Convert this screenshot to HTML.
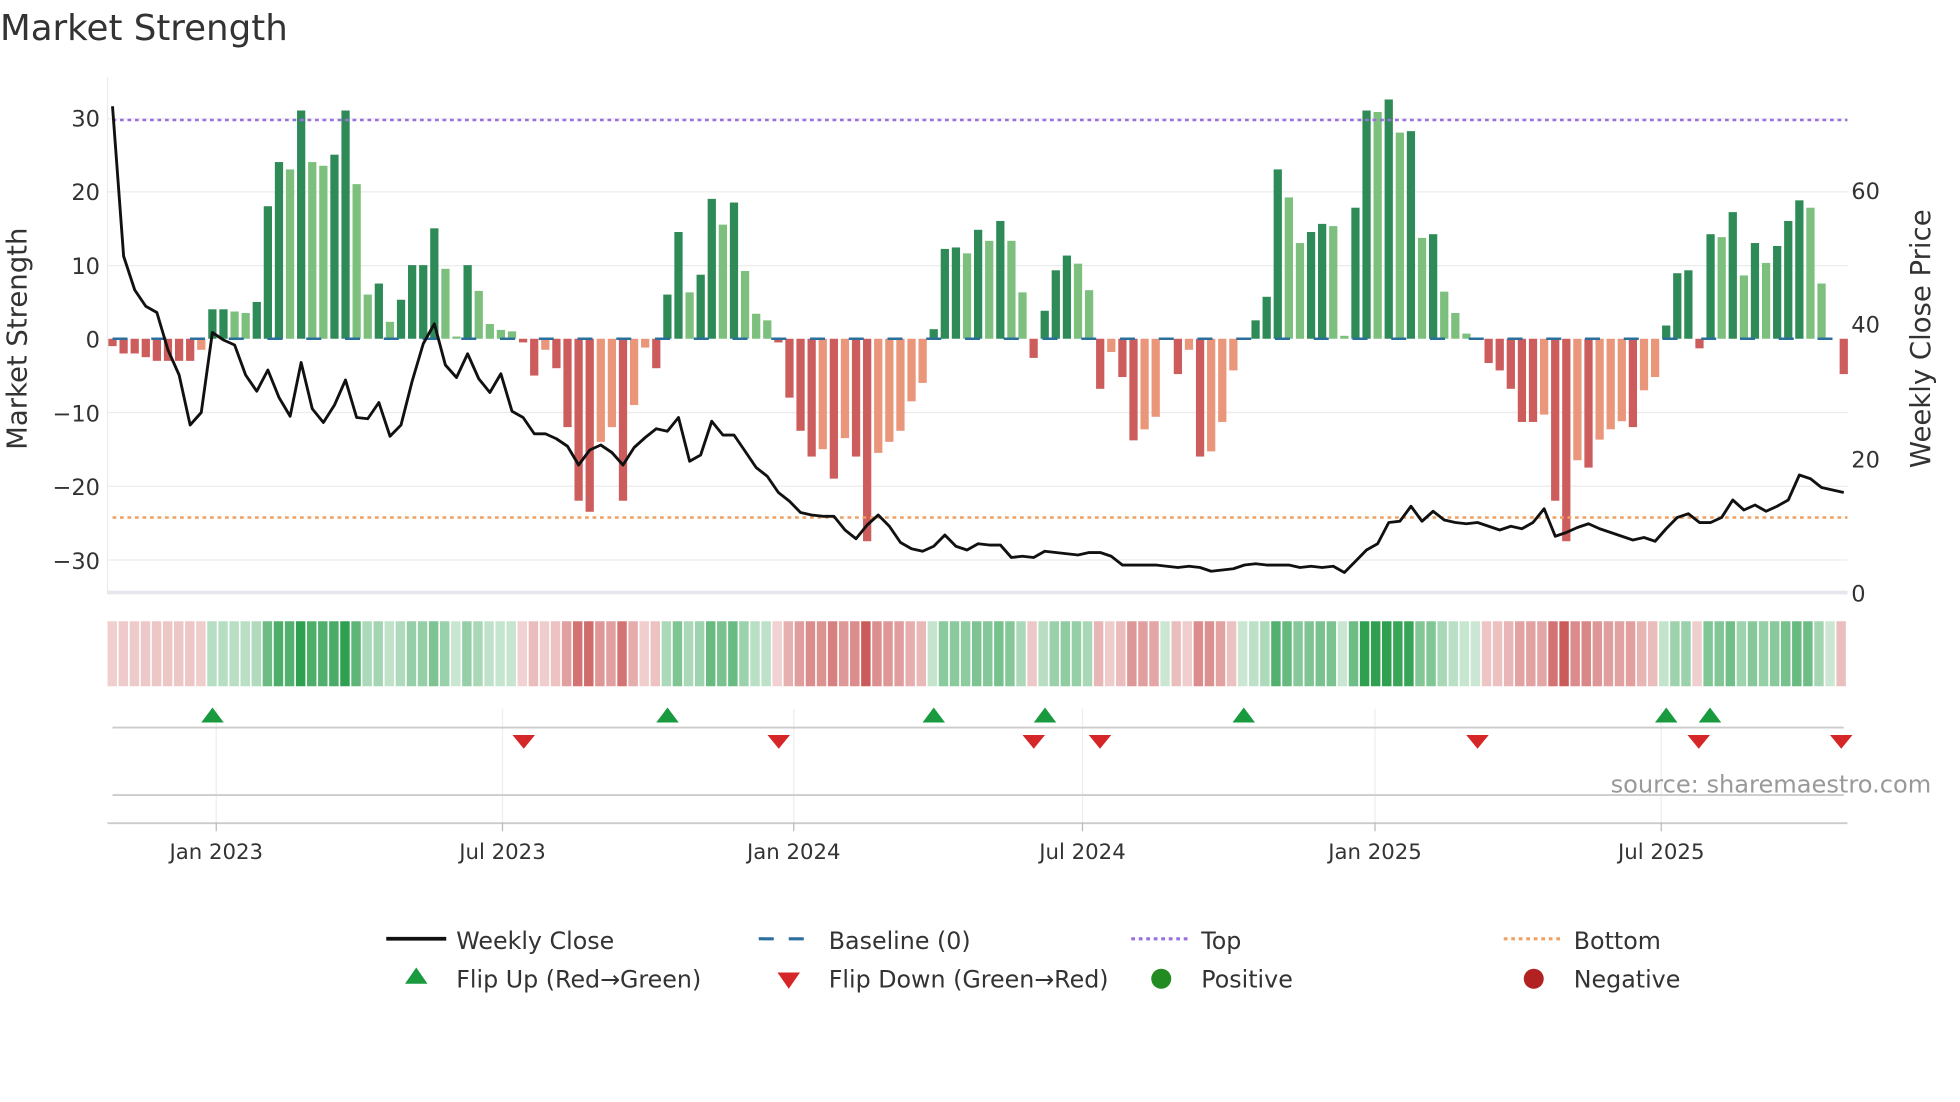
<!DOCTYPE html>
<html><head><meta charset="utf-8"><style>
html,body{margin:0;padding:0;background:#fff;width:1960px;height:1102px;overflow:hidden}
svg{display:block}
text{font-family:"DejaVu Sans","Liberation Sans",sans-serif;fill:#333}
</style></head><body>
<svg id="s" width="1960" height="1102" viewBox="0 0 1568 881.6" xmlns="http://www.w3.org/2000/svg">
<text x="0" y="32" font-size="28.5">Market Strength</text>
<g stroke="#ececec" stroke-width="1">
<line x1="86" x2="1478" y1="95" y2="95"/><line x1="86" x2="1478" y1="153.5" y2="153.5"/>
<line x1="86" x2="1478" y1="212.5" y2="212.5"/><line x1="86" x2="1478" y1="330" y2="330"/>
<line x1="86" x2="1478" y1="389" y2="389"/><line x1="86" x2="1478" y1="448" y2="448"/>
<line x1="86" x2="86" y1="62" y2="475"/>
</g>
<line x1="86" x2="1478" y1="474" y2="474" stroke="#e6e6ee" stroke-width="3"/>
<g font-size="18" text-anchor="end">
<text x="80" y="101">30</text><text x="80" y="160">20</text><text x="80" y="219">10</text>
<text x="80" y="278">0</text><text x="80" y="337">−10</text><text x="80" y="396">−20</text><text x="80" y="455">−30</text>
</g>
<g font-size="18">
<text x="1481" y="159">60</text><text x="1481" y="266">40</text><text x="1481" y="374">20</text><text x="1481" y="481">0</text>
</g>
<text transform="translate(21,271) rotate(-90)" font-size="22" text-anchor="middle">Market Strength</text>
<text transform="translate(1544,271) rotate(-90)" font-size="22" text-anchor="middle">Weekly Close Price</text>
<g id="bars"></g>
<line x1="90" x2="1478" y1="271" y2="271" stroke="#2a6f9e" stroke-width="2" stroke-dasharray="12,19"/>
<line x1="90" x2="1478" y1="96" y2="96" stroke="#9b6fe0" stroke-width="2" stroke-dasharray="3,3"/>
<line x1="90" x2="1478" y1="414" y2="414" stroke="#f0a060" stroke-width="2" stroke-dasharray="3,3"/>
<polyline id="price" fill="none" stroke="#111" stroke-width="2.3" stroke-linejoin="round"/>
<g id="strip"></g>
<g stroke="#eee" stroke-width="1">
<line x1="173" x2="173" y1="567" y2="658"/><line x1="402" x2="402" y1="567" y2="658"/>
<line x1="635" x2="635" y1="567" y2="658"/><line x1="866" x2="866" y1="567" y2="658"/>
<line x1="1100" x2="1100" y1="567" y2="658"/><line x1="1329" x2="1329" y1="567" y2="658"/>
</g>
<line x1="90" x2="1475" y1="582" y2="582" stroke="#ccc" stroke-width="1.5"/>
<line x1="90" x2="1475" y1="636" y2="636" stroke="#ccc" stroke-width="1.5"/>
<line x1="86" x2="1478" y1="658.5" y2="658.5" stroke="#ccc" stroke-width="1.5"/>
<g stroke="#bbb" stroke-width="1">
<line x1="173" x2="173" y1="658" y2="665"/><line x1="402" x2="402" y1="658" y2="665"/>
<line x1="635" x2="635" y1="658" y2="665"/><line x1="866" x2="866" y1="658" y2="665"/>
<line x1="1100" x2="1100" y1="658" y2="665"/><line x1="1329" x2="1329" y1="658" y2="665"/>
</g>
<g id="marks"></g>
<text x="1545" y="634" font-size="19.3" text-anchor="end" style="fill:#999">source: sharemaestro.com</text>
<g font-size="17" text-anchor="middle">
<text x="173" y="687">Jan 2023</text><text x="402" y="687">Jul 2023</text><text x="635" y="687">Jan 2024</text>
<text x="866" y="687">Jul 2024</text><text x="1100" y="687">Jan 2025</text><text x="1329" y="687">Jul 2025</text>
</g>
<g font-size="19">
<line x1="309" x2="357" y1="751" y2="751" stroke="#111" stroke-width="3"/>
<text x="365" y="759">Weekly Close</text>
<line x1="607" x2="655" y1="751" y2="751" stroke="#2a6f9e" stroke-width="2.5" stroke-dasharray="12,12"/>
<text x="663" y="759">Baseline (0)</text>
<line x1="905" x2="950" y1="751" y2="751" stroke="#9b6fe0" stroke-width="2.5" stroke-dasharray="3,3"/>
<text x="961" y="759">Top</text>
<line x1="1203" x2="1248" y1="751" y2="751" stroke="#f0a060" stroke-width="2.5" stroke-dasharray="3,3"/>
<text x="1259" y="759">Bottom</text>
<polygon points="333,774 324,787 342,787" fill="#1a9a3f"/>
<text x="365" y="790">Flip Up (Red→Green)</text>
<polygon points="622,778 640,778 631,791" fill="#d62728"/>
<text x="663" y="790">Flip Down (Green→Red)</text>
<circle cx="929" cy="783" r="8" fill="#228b22"/>
<text x="961" y="790">Positive</text>
<circle cx="1227" cy="783" r="8" fill="#b22222"/>
<text x="1259" y="790">Negative</text>
</g>
</svg>
<script>
var v=[-1,-2,-2,-2.5,-3,-3,-3,-3,-1.5,4,4,3.7,3.5,5,18,24,23,31,24,23.5,25,31,21,6,7.5,2.3,5.3,10,10,15,9.5,0.3,10,6.5,2,1.2,1,-0.5,-5,-1.5,-4,-12,-22,-23.5,-14,-12,-22,-9,-1.2,-4,6,14.5,6.3,8.7,19,15.5,18.5,9.2,3.4,2.5,-0.5,-8,-12.5,-16,-15,-19,-13.5,-16,-27.5,-15.5,-14,-12.5,-8.5,-6,1.3,12.2,12.4,11.6,14.8,13.3,16,13.3,6.3,-2.6,3.8,9.3,11.3,10.2,6.6,-6.8,-1.8,-5.2,-13.8,-12.3,-10.6,0,-4.8,-1.5,-16,-15.3,-11.3,-4.3,0,2.5,5.7,23,19.2,13,14.5,15.6,15.3,0.4,17.8,31,30.8,32.5,28,28.2,13.7,14.2,6.4,3.5,0.7,0,-3.3,-4.3,-6.8,-11.3,-11.3,-10.3,-22,-27.5,-16.5,-17.5,-13.7,-12.3,-11.2,-12,-7,-5.2,1.8,8.9,9.3,-1.3,14.2,13.8,17.2,8.6,13,10.3,12.6,16,18.8,17.8,7.5,0,-4.8];
var py=[85,205,232,245,250,280,300,340,330,266,272,276,300,313,296,318,333,290,327,338,324,304,334,335,322,349,340,305,275,259,292,302,283,303,314,299,329,334,347,347,351,357,372,360,356,362,372,358,350,343,345,334,369,364,337,348,348,361,374,381,394,401,410,412,413,413,424,431,420,412,421,434,439,441,437,428,437,440,435,436,436,446,445,446,441,442,443,444,442,442,445,452,452,452,452,453,454,453,454,457,456,455,452,451,452,452,452,454,453,454,453,458,449,440,435,418,417,405,417,409,416,418,419,418,421,424,421,423,418,407,429,426,422,419,423,426,429,432,430,433,423,414,411,418,418,414,400,408,404,409,405,400,380,383,390,392,394];
var NS="http://www.w3.org/2000/svg",b=document.getElementById('bars'),st=document.getElementById('strip');
function el(t,a,p){var e=document.createElementNS(NS,t);for(var k in a)e.setAttribute(k,a[k]);p.appendChild(e);}
var sp=(1475-90)/156;
for(var i=0;i<v.length;i++){var x=90+i*sp,y0=271,h=v[i]*5.89,pr=i?v[i-1]:0,c;
 if(v[i]>=0)c=(v[i]>=pr)?'#2e8b57':'#7dc07d';else c=(v[i]<=pr)?'#cd5c5c':'#e9967a';
 if(Math.abs(h)>0.3)el('rect',{x:x-3.3,y:h>0?y0-h:y0,width:6.6,height:Math.abs(h),fill:c},b);
 var a=Math.min(1,0.25+Math.abs(v[i])/40),col=v[i]>=0?'rgba(46,160,80,'+a+')':'rgba(200,80,80,'+a+')';
 var sx=86+i*(1392/157);el('rect',{x:sx,y:497,width:1392/157-1.3,height:52,fill:col},st);}
var pts=[];for(var i=0;i<py.length;i++)pts.push((90+i*sp).toFixed(1)+','+py[i]);
document.getElementById('price').setAttribute('points',pts.join(' '));
var m=document.getElementById('marks');
[170,534,747,836,995,1333,1368].forEach(function(x){el('polygon',{points:(x)+',566 '+(x-9)+',578 '+(x+9)+',578',fill:'#1a9a3f'},m);});
[419,623,827,880,1182,1359,1473].forEach(function(x){el('polygon',{points:(x-9)+',588 '+(x+9)+',588 '+x+',599',fill:'#d62728'},m);});
</script>
</body></html>
